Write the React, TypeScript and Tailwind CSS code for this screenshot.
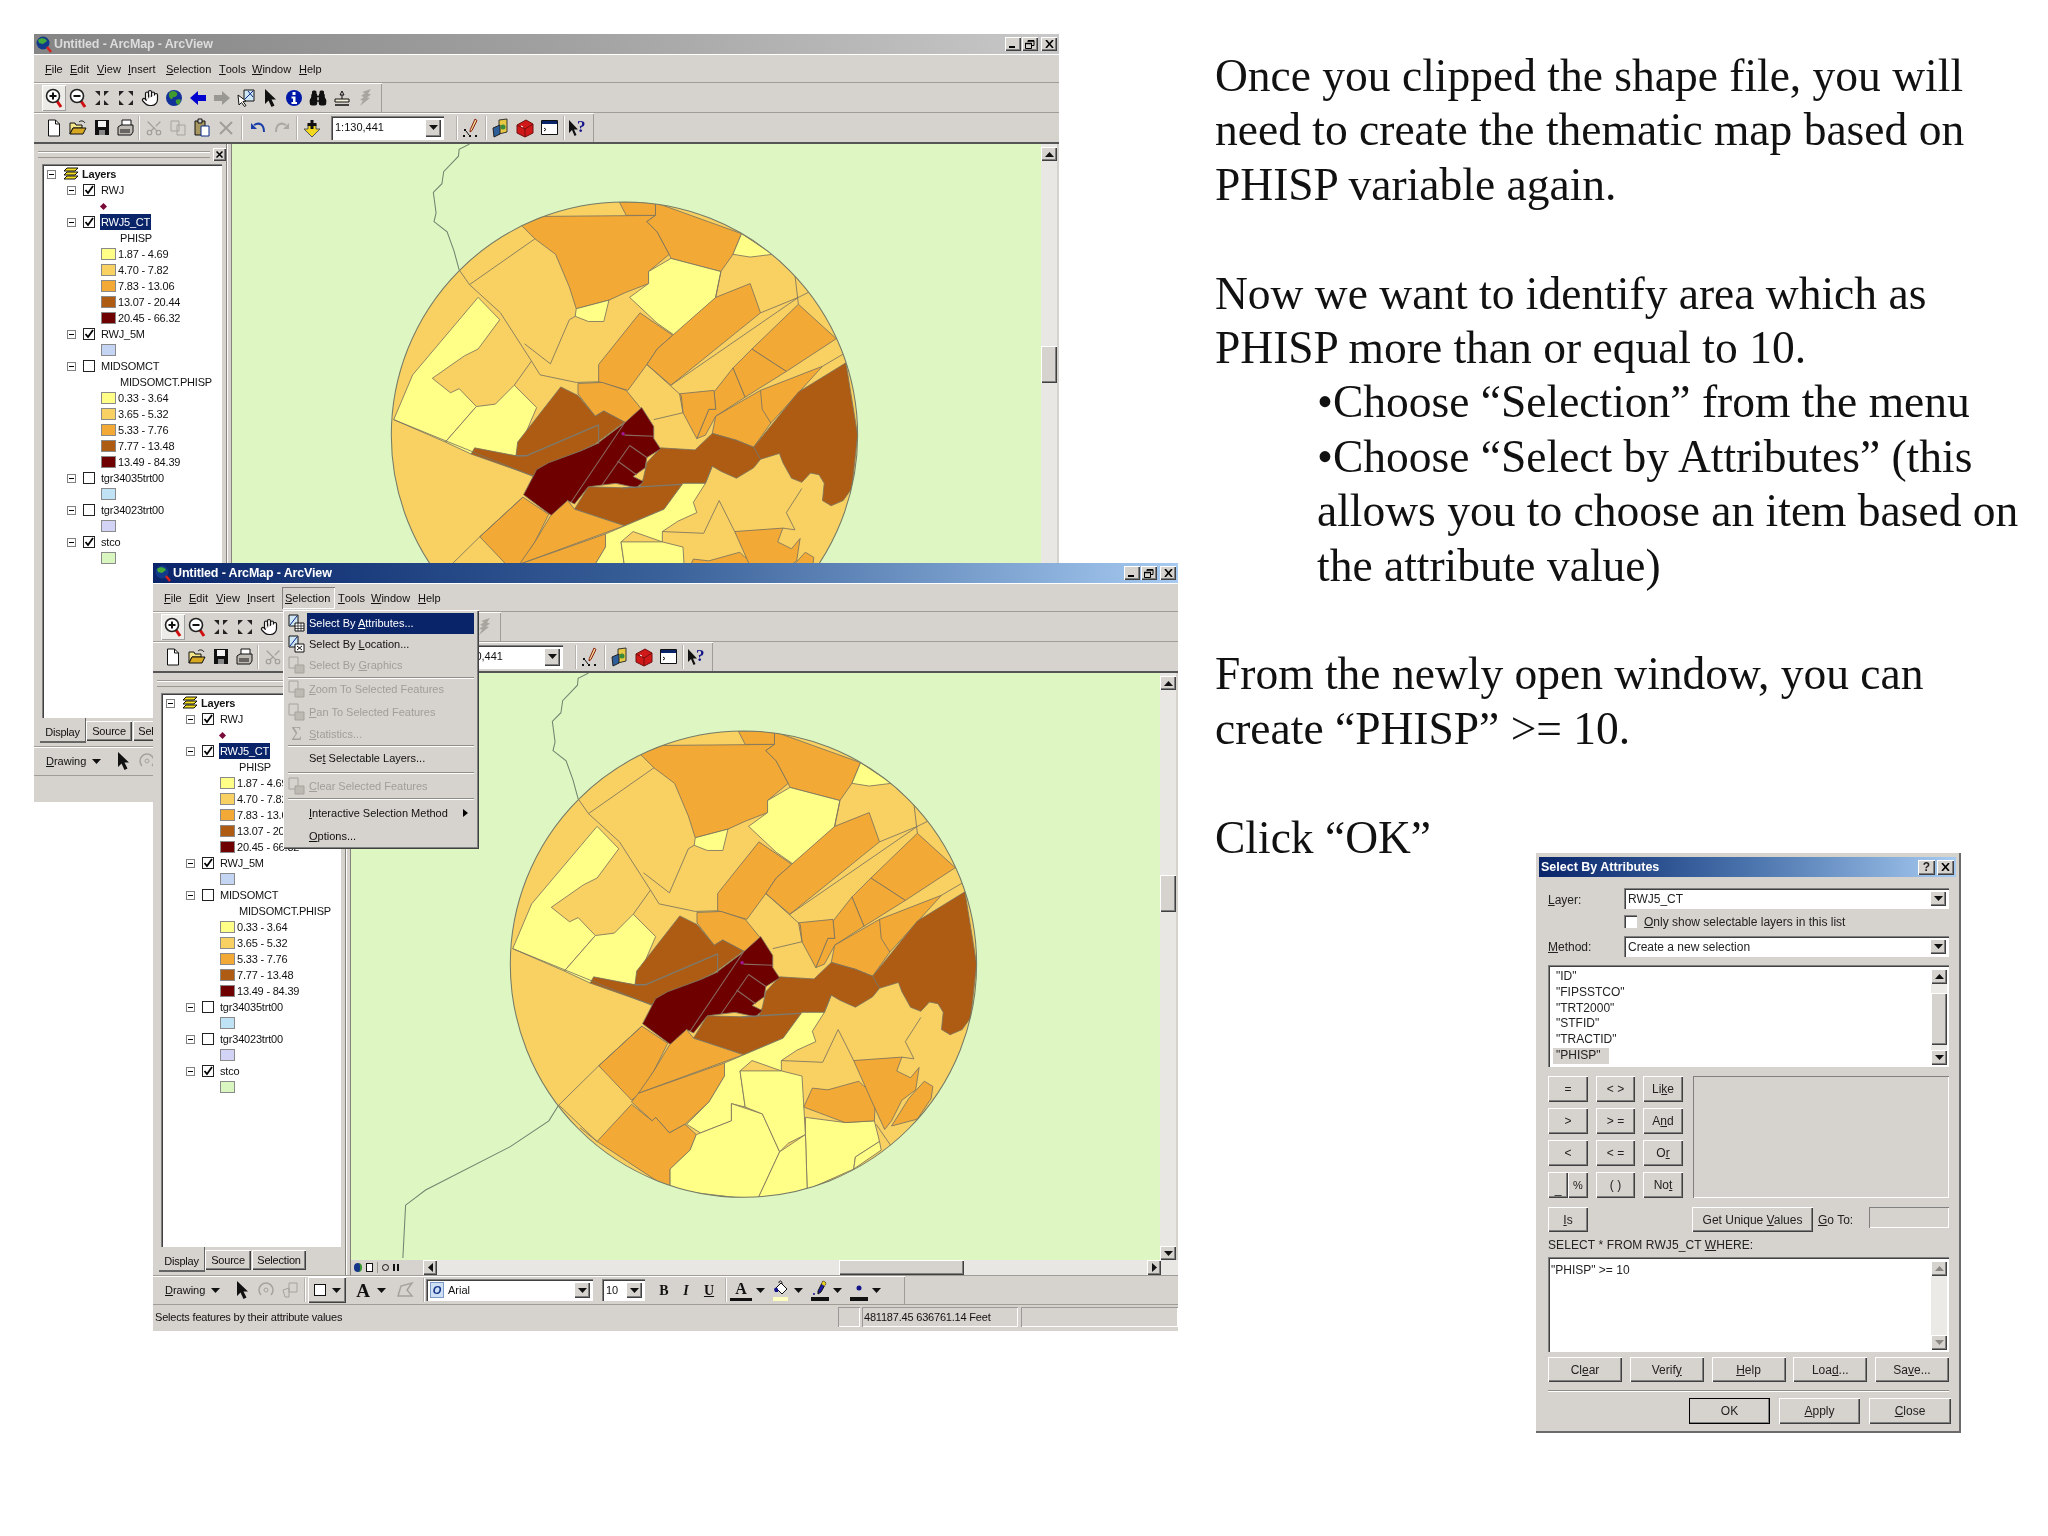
import type { ReactNode } from 'react'
import { Binoculars, Hand, Scissors } from 'lucide-react'

const raised = 'shadow-[inset_1px_1px_0_#fff,inset_-1px_-1px_0_#404040,inset_-2px_-2px_0_#808080]'
const sunken = 'shadow-[inset_1px_1px_0_#808080,inset_2px_2px_0_#404040,inset_-1px_-1px_0_#fff]'

const YEL = '#ffff88'
const LIT = '#f9d162'
const ORG = '#f3a935'
const BRN = '#ae5c14'
const DRK = '#6e0000'

const regions: [string, string][] = [
  [ORG, '465,215 530,190 855,187 830,205 860,235 895,300 835,350 835,385 770,410 720,433 625,458 605,395 565,300 505,255'],
  [ORG, '855,150 1105,240 1080,300 1045,350 900,312 895,300 860,235 830,205 855,187'],
  [ORG, '750,148 855,150 855,187 770,187'],
  [YEL, '900,312 1045,350 1020,470 910,535 860,500 780,425 835,385 835,350'],
  [YEL, '720,433 705,495 660,495 622,480 625,458'],
  [YEL, '1105,240 1195,300 1130,308 1080,300'],
  [YEL, '340,425 403,490 340,575 300,595 207,660 260,702 285,690 335,742 245,845 95,780 150,650'],
  [YEL, '445,680 510,745 450,885 330,870 320,880 245,845 335,742 390,735'],
  [ORG, '810,470 905,535 860,575 830,620 775,695 690,670 690,620'],
  [ORG, '1130,385 1160,470 900,680 830,620 860,575 905,535 1030,425'],
  [ORG, '1270,445 1380,545 1235,640 1135,575'],
  [ORG, '1135,575 1235,640 1115,715 1080,630'],
  [ORG, '1080,630 1115,715 1030,770 1000,825 975,835 1010,750 1030,750 1025,700'],
  [ORG, '925,705 1025,695 1030,750 1010,750 975,835 935,760'],
  [ORG, '1340,625 1190,790 1140,860 1090,840 1020,820 1030,770 1160,695'],
  [ORG, '630,675 700,672 770,695 815,750 770,790 705,755 680,770 630,705'],
  [BRN, '580,685 630,710 680,770 705,755 765,787 680,850 640,870 540,910 505,945 320,880 330,862 450,885 455,845'],
  [BRN, '1408,615 1442,825 1425,980 1400,1015 1365,1030 1340,1015 1345,965 1330,940 1305,935 1280,962 1250,950 1225,905 1215,878 1160,895 1140,860 1270,700'],
  [BRN, '870,862 970,868 1020,820 1090,840 1140,860 1160,895 1140,920 1090,950 1045,930 1020,915 1000,965 935,965 880,1040 765,1088 620,1040 660,975 760,978 810,975 820,950 830,905'],
  [DRK, '815,745 850,800 850,835 870,865 830,890 825,920 790,945 820,960 800,978 740,965 660,975 620,1025 600,1015 555,1060 472,998 510,925 545,905 640,870 685,850 765,790'],
  [ORG, '470,1005 545,1055 505,1135 460,1205 440,1220 345,1120'],
  [ORG, '550,1060 600,1015 620,1040 765,1088 460,1200 505,1135'],
  [ORG, '710,1112 710,1150 665,1225 595,1290 550,1315 510,1270 500,1280 440,1225 460,1200'],
  [ORG, '440,1232 500,1280 510,1270 550,1315 595,1290 628,1320 610,1365 552,1420 552,1480 340,1340'],
  [YEL, '1000,965 965,1020 975,1050 920,1075 875,1105 875,1135 790,1105 755,1135 770,1240 730,1230 730,1280 640,1315 600,1290 665,1225 710,1150 710,1112 880,1040 935,965'],
  [YEL, '552,1420 610,1365 628,1320 730,1280 730,1230 820,1260 870,1370 805,1510 552,1480'],
  [YEL, '755,1135 875,1135 935,1150 945,1320 895,1345 870,1370 820,1260 770,1240'],
  [YEL, '945,1270 1060,1285 1145,1280 1160,1340 1090,1385 1085,1420 950,1480 945,1320'],
  [YEL, '870,1370 945,1320 950,1480 805,1510'],
  [YEL, '1090,1385 1160,1340 1165,1365 1085,1420'],
  [ORG, '940,1240 965,1185 1010,1190 1100,1165 1115,1180 1150,1180 1145,1280 1060,1285'],
  [ORG, '1085,1105 1225,1095 1210,1135 1250,1155 1275,1125 1265,1190 1225,1220 1195,1280 1175,1305 1145,1240'],
  [ORG, '1195,1295 1245,1215 1290,1165 1315,1180 1310,1215 1270,1275'],
]

const boundaries = [
  '285,345 315,388 405,470 495,610 520,650 625,672 690,670',
  '315,388 505,255',
  '95,780 500,945',
  '228,1235 345,1120 470,1005',
  '230,1235 340,1340',
  '475,560 550,618 605,490 622,480',
  '495,610 445,680',
  '830,620 930,710 935,760 850,780',
  '1270,445 1260,360 1195,300',
  '1160,470 1270,425 1300,410',
  '900,680 1270,425',
  '1045,350 1030,425',
  '1340,625 1408,585',
  '1160,695 1165,750 1190,790',
  '875,1105 995,1110 1040,1015 1085,1105',
  '1000,965 1020,915',
  '1280,980 1235,1050 1260,1100 1225,1095',
  '1150,1290 1195,1355',
  '290,1300 340,1340',
]

function MapView() {
  return (
    <svg viewBox="0 0 809 587" className="block w-full h-full">
      <defs>
        <clipPath id="ringClip">
          <circle cx="765" cy="825" r="677" />
        </clipPath>
      </defs>
      <g transform="translate(129 7) scale(.3444)">
        <polyline
          points="315,-20 285,-5 283,15 240,60 235,95 210,120 218,180 212,205 250,235 270,290 285,345"
          fill="none"
          stroke="#71836f"
          strokeWidth="3"
        />
        <polyline
          points="228,1235 200,1280 88,1355 -158,1481 -216,1525 -224,1678"
          fill="none"
          stroke="#71836f"
          strokeWidth="3"
        />
        <circle cx="765" cy="825" r="677" fill={LIT} />
        <g clipPath="url(#ringClip)">
          {regions.map(([fill, pts]) => (
            <polygon key={pts} points={pts} fill={fill} stroke="#7d7460" strokeWidth="2.5" strokeLinejoin="round" />
          ))}
          {boundaries.map(pts => (
            <polyline key={pts} points={pts} fill="none" stroke="#7d7460" strokeWidth="2.5" />
          ))}
          <polyline points="690,795 480,885 450,885" fill="none" stroke="#7b7b70" strokeWidth="4" />
          <polyline points="690,795 690,850" fill="none" stroke="#7b7b70" strokeWidth="3" />
          <polyline points="760,978 930,968" fill="none" stroke="#7b7b70" strokeWidth="4" />
          <polyline points="765,790 610,1020" fill="none" stroke="#8a6a60" strokeWidth="3" />
          <polyline points="765,825 850,828" fill="none" stroke="#8a6a60" strokeWidth="3" />
          <polyline points="780,855 700,970" fill="none" stroke="#8a6a60" strokeWidth="3" />
          <polyline points="745,900 800,940" fill="none" stroke="#8a6a60" strokeWidth="3" />
          <polyline points="780,855 830,890" fill="none" stroke="#8a6a60" strokeWidth="3" />
          <circle cx="761" cy="821" r="5" fill="#a0189a" />
        </g>
        <circle cx="765" cy="825" r="677" fill="none" stroke="#747a66" strokeWidth="3" />
      </g>
    </svg>
  )
}

function Glyph({ name }: { name: string }) {
  const svg = 'block'
  switch (name) {
    case 'zoomIn':
    case 'zoomOut':
      return (
        <svg width="20" height="22" viewBox="0 0 20 22" className={svg}>
          <line x1="13" y1="14" x2="17" y2="20" stroke="#d01010" strokeWidth="3" />
          <circle cx="9" cy="9" r="6.5" fill="#fff" stroke="#222" strokeWidth="1.6" />
          <rect x="5.5" y="8" width="7" height="2" fill="#111" />
          {name === 'zoomIn' && <rect x="8" y="5.5" width="2" height="7" fill="#111" />}
        </svg>
      )
    case 'fixedIn':
      return (
        <svg width="16" height="16" viewBox="0 0 16 16" className={svg}>
          <path d="M1 1h5v5zM15 1h-5v5zM1 15h5v-5zM15 15h-5v-5z" fill="#222" />
        </svg>
      )
    case 'fixedOut':
      return (
        <svg width="16" height="16" viewBox="0 0 16 16" className={svg}>
          <path d="M1 1h5L1 6zM15 1h-5l5 5zM1 15h5l-5-5zM15 15h-5l5-5z" fill="#222" />
        </svg>
      )
    case 'hand':
      return <Hand size={18} fill="#fff" color="#111" strokeWidth={1.6} />
    case 'globe':
      return (
        <svg width="18" height="20" viewBox="0 0 18 20" className={svg}>
          <circle cx="9" cy="10" r="8" fill="#12309a" />
          <path d="M5 4c3-2 6-1 7 1s-1 4-3 4-1 3-3 2-3-5-1-7zM11 12c2-1 4-1 5 0l-2 5c-2 0-4-3-3-5z" fill="#3f9a2f" />
        </svg>
      )
    case 'back':
      return (
        <svg width="18" height="16" viewBox="0 0 18 16" className={svg}>
          <path d="M1 8l8-7v4h8v6H9v4z" fill="#0000d0" />
        </svg>
      )
    case 'fwd':
      return (
        <svg width="18" height="16" viewBox="0 0 18 16" className={svg}>
          <path d="M17 8L9 1v4H1v6h8v4z" fill="#9a9892" />
        </svg>
      )
    case 'selFeat':
      return (
        <svg width="20" height="20" viewBox="0 0 20 20" className={svg}>
          <path d="M8 2h10v11H8z" fill="#cfe6f5" stroke="#111" />
          <path d="M9 11l8-8M12 3l5 6" stroke="#0a2a8a" fill="none" />
          <path d="M2 7l1 10 2.500-2.500 3 4 1.500-1-3-4 3-.5z" fill="#fff" stroke="#111" />
        </svg>
      )
    case 'pointer':
      return (
        <svg width="14" height="20" viewBox="0 0 14 20" className={svg}>
          <path d="M2 1v15l3.500-3.500 3 6.500 3-1.500-3-6H13z" fill="#111" />
        </svg>
      )
    case 'info':
      return (
        <svg width="18" height="18" viewBox="0 0 18 18" className={svg}>
          <circle cx="9" cy="9" r="8" fill="#0018a8" />
          <rect x="7.500" y="3" width="3" height="3" fill="#fff" />
          <path d="M6.500 7.500h4V13h1.500v2H6.500v-2H8V9.500H6.500z" fill="#fff" />
        </svg>
      )
    case 'binoc':
      return <Binoculars size={18} fill="#111" color="#111" strokeWidth={2} />
    case 'measure':
      return (
        <svg width="20" height="20" viewBox="0 0 20 20" className={svg}>
          <path d="M8 7l2-4 2 4zM10 7v5" stroke="#111" fill="none" />
          <path d="M3 11h14v3H3z" fill="#f2f0da" stroke="#111" />
          <path d="M3 17h14" stroke="#111" strokeWidth="1.500" />
        </svg>
      )
    case 'bolt':
      return (
        <svg width="16" height="20" viewBox="0 0 16 20" className={svg}>
          <path d="M13 1L4 4l3 1-4 3 3 1-4 3 3 .5L2 18l10-8-3-.5 4-3-3-1z" fill="#a8a59e" />
        </svg>
      )
    case 'new':
      return (
        <svg width="14" height="18" viewBox="0 0 14 18" className={svg}>
          <path d="M1.500 1h7l4 4v12h-11z" fill="#fff" stroke="#111" />
          <path d="M8.500 1v4h4" fill="none" stroke="#111" />
        </svg>
      )
    case 'open':
      return (
        <svg width="18" height="16" viewBox="0 0 18 16" className={svg}>
          <path d="M1 3h5l1 2h6v3H4L1 14z" fill="#f4e48a" stroke="#111" />
          <path d="M1 14l3-6h13l-3 6z" fill="#d8a820" stroke="#111" />
          <path d="M10 2c2-2 5-1 6 1" stroke="#111" fill="none" />
        </svg>
      )
    case 'save':
      return (
        <svg width="16" height="17" viewBox="0 0 16 17" className={svg}>
          <path d="M1 1h14v15H1z" fill="#111" />
          <path d="M4 2h8v6H4z" fill="#f4f4f4" />
          <path d="M5 11h6v5H5z" fill="#888" />
        </svg>
      )
    case 'print':
      return (
        <svg width="18" height="17" viewBox="0 0 18 17" className={svg}>
          <path d="M5 1h9v6H5z" fill="#fff" stroke="#111" />
          <path d="M1 8l3-2h12v7l-2 3H1z" fill="#bdbbb4" stroke="#111" />
          <path d="M3 11h10M3 13h10" stroke="#111" />
        </svg>
      )
    case 'cut':
      return <Scissors size={18} color="#a09e98" className="-rotate-90" strokeWidth={1.6} />
    case 'copy':
      return (
        <svg width="18" height="16" viewBox="0 0 18 16" className={svg}>
          <path d="M2 1h8v10H2zM8 5h8v10H8z" fill="#d6d3ce" stroke="#a5a39c" />
        </svg>
      )
    case 'paste':
      return (
        <svg width="18" height="19" viewBox="0 0 18 19" className={svg}>
          <path d="M2 3h10v14H2z" fill="#a89860" stroke="#111" />
          <path d="M5 1h4v4H5z" fill="#ccc" stroke="#111" />
          <path d="M8 8h8v10H8z" fill="#fff" stroke="#0a2a8a" />
        </svg>
      )
    case 'del':
      return (
        <svg width="16" height="16" viewBox="0 0 16 16" className={svg}>
          <path d="M2 2l12 12M14 2L2 14" stroke="#a09e98" strokeWidth="2" />
        </svg>
      )
    case 'undo':
      return (
        <svg width="16" height="12" viewBox="0 0 16 12" className={svg}>
          <path d="M4 3c5-3 10-1 10 7" stroke="#1a3fa8" strokeWidth="2" fill="none" />
          <path d="M1 1v6h6z" fill="#1a3fa8" />
        </svg>
      )
    case 'redo':
      return (
        <svg width="16" height="12" viewBox="0 0 16 12" className={svg}>
          <path d="M12 3C7 0 2 2 2 10" stroke="#aaa8a2" strokeWidth="2" fill="none" />
          <path d="M15 1v6H9z" fill="#aaa8a2" />
        </svg>
      )
    case 'add':
      return (
        <svg width="18" height="20" viewBox="0 0 18 20" className={svg}>
          <path d="M5 7h8v4h4l-8 8-8-8h4z" fill="#f2d820" stroke="#555" />
          <path d="M7.500 2h3v3h3v3h-3v3h-3V8h-3V5h3z" fill="#111" />
        </svg>
      )
    case 'editor':
      return (
        <svg width="20" height="20" viewBox="0 0 20 20" className={svg}>
          <path d="M14 1l2 1.500-5 10-2 1.500.3-2.500z" fill="#f0d890" stroke="#8a2010" />
          <path d="M2 17h2v2H2zM8 17h2v2H8zM14 17h2v2h-2zM3 11h2v2H3z" fill="#111" />
          <path d="M5 13l3 4" stroke="#111" />
        </svg>
      )
    case 'catalog':
      return (
        <svg width="18" height="20" viewBox="0 0 18 20" className={svg}>
          <path d="M7 2l8-1v13l-8 2z" fill="#e8c840" stroke="#333" />
          <path d="M1 10l7-3v9l-6 3z" fill="#2f5f9a" stroke="#222" />
          <circle cx="11" cy="9" r="2.500" fill="#3a8a3a" />
        </svg>
      )
    case 'toolbox':
      return (
        <svg width="18" height="20" viewBox="0 0 18 20" className={svg}>
          <path d="M1 7l9-5 7 4v9l-8 4-8-4z" fill="#d01818" stroke="#701010" />
          <path d="M1 7l8 4 8-5M9 11v8" stroke="#701010" fill="none" />
          <path d="M5 8l2 1" stroke="#fff" />
        </svg>
      )
    case 'cmd':
      return (
        <svg width="17" height="15" viewBox="0 0 17 15" className={svg}>
          <path d="M.5.500h16v14H.5z" fill="#fff" stroke="#111" />
          <path d="M1 1h15v3H1z" fill="#0a246a" />
          <path d="M3 8l2 1.500L3 11" stroke="#111" fill="none" />
        </svg>
      )
    case 'helpQ':
      return (
        <svg width="22" height="20" viewBox="0 0 22 20" className={svg}>
          <path d="M1 2v13l3-3 2.500 6 2-1-2.500-5.500H10z" fill="#111" />
          <text x="9" y="14" fontSize="17" fontWeight="700" fontFamily="Liberation Serif, serif" fill="#14148a">
            ?
          </text>
        </svg>
      )
    case 'rotate':
      return (
        <svg width="16" height="18" viewBox="0 0 16 18" className={svg}>
          <path d="M3 14A7 7 0 1 1 13 14" fill="none" stroke="#a5a39c" strokeWidth="1.500" />
          <circle cx="8" cy="9" r="2" fill="none" stroke="#a5a39c" />
        </svg>
      )
    case 'edit':
      return (
        <svg width="18" height="18" viewBox="0 0 18 18" className={svg}>
          <path d="M8 2h8v9H8zM2 9l6-2v9H4z" fill="none" stroke="#a5a39c" />
        </svg>
      )
    case 'poly':
      return (
        <svg width="18" height="18" viewBox="0 0 18 18" className={svg}>
          <path d="M2 15l3-10 11-3-5 7 5 6z" fill="none" stroke="#a5a39c" strokeWidth="1.500" />
        </svg>
      )
    case 'bucket':
      return (
        <svg width="18" height="21" viewBox="0 0 18 21" className={svg}>
          <path d="M4 8l5-5 6 6-5 5z" fill="#fff" stroke="#111" />
          <path d="M7 3c0-3 3-3 3 1" stroke="#111" fill="none" />
          <path d="M2 9c2-2 3-2 4 0v3H3z" fill="#14148a" />
          <rect x="1" y="17" width="15" height="4" fill="#fdfdc0" />
        </svg>
      )
    case 'pen':
      return (
        <svg width="18" height="21" viewBox="0 0 18 21" className={svg}>
          <path d="M12 1l3 2-5 9-3 2 0-3z" fill="#1a1aa8" stroke="#111" />
          <path d="M12 1l3 2-1.500 3-3-2z" fill="#e8d020" />
          <circle cx="3" cy="14" r="1" fill="#14148a" />
          <rect x="0" y="17" width="18" height="4" fill="#111" />
        </svg>
      )
    case 'point':
      return (
        <svg width="18" height="21" viewBox="0 0 18 21" className={svg}>
          <circle cx="9" cy="8" r="2.500" fill="#14148a" />
          <rect x="0" y="17" width="18" height="4" fill="#111" />
        </svg>
      )
    default:
      return null
  }
}

function Btn({ name, pressed, className }: { name: string; pressed?: boolean; className?: string }) {
  return (
    <div
      className={`w-[24px] h-[26px] shrink-0 flex items-center justify-center ${
        pressed ? 'bg-[#ecebe8] shadow-[inset_1px_1px_0_#fff,inset_-1px_-1px_0_#a0a0a0]' : ''
      } ${className ?? ''}`}
    >
      <Glyph name={name} />
    </div>
  )
}

function Sep({ className }: { className?: string }) {
  return <div className={`w-[2px] h-[24px] shrink-0 bg-[#b5b2ab] border-r border-white ${className ?? ''}`} />
}

function Caret({ className }: { className?: string }) {
  return (
    <svg width="9" height="5" viewBox="0 0 9 5" className={`shrink-0 ${className ?? ''}`}>
      <path d="M0 0h9L4.500 5z" fill="#111" />
    </svg>
  )
}

function ScrollBtn({ dir, className, dim }: { dir: 'up' | 'down' | 'left' | 'right'; className?: string; dim?: boolean }) {
  const shape = { up: 'M0 5L4.500 0 9 5z', down: 'M0 0h9L4.500 5z', left: 'M5 0v9L0 4.500z', right: 'M0 0v9l5-4.500z' }[dir]
  return (
    <div className={`bg-[#d6d3ce] flex items-center justify-center ${raised} ${className ?? ''}`}>
      <svg width="9" height="9" viewBox="0 0 9 9">
        <g transform={dir === 'left' || dir === 'right' ? 'translate(2 0)' : 'translate(0 2)'}>
          <path d={shape} fill={dim ? '#8a8880' : '#111'} />
        </g>
      </svg>
    </div>
  )
}

function Combo({ children, className }: { children: ReactNode; className?: string }) {
  return (
    <div className={`flex items-center bg-white pl-[4px] pr-[3px] ${sunken} ${className ?? ''}`}>
      <div className="flex-1 flex items-center gap-[4px] whitespace-nowrap overflow-hidden">{children}</div>
      <ScrollBtn dir="down" className="w-[16px] h-[calc(100%-6px)] shrink-0" />
    </div>
  )
}

const menus: [ReactNode, string][] = [
  [<><u>F</u>ile</>, 'w-[25px]'],
  [<><u>E</u>dit</>, 'w-[27px]'],
  [<><u>V</u>iew</>, 'w-[31px]'],
  [<><u>I</u>nsert</>, 'w-[38px]'],
  [<><u>S</u>election</>, 'w-[53px]'],
  [<><u>T</u>ools</>, 'w-[33px]'],
  [<><u>W</u>indow</>, 'w-[47px]'],
  [<><u>H</u>elp</>, 'w-[40px]'],
]

type Row =
  | { kind: 'layer'; name: string; on: boolean; selected?: boolean }
  | { kind: 'sym'; color: string; label?: string }
  | { kind: 'mark' }
  | { kind: 'head'; name: string }

const tree: Row[] = [
  { kind: 'layer', name: 'RWJ', on: true },
  { kind: 'mark' },
  { kind: 'layer', name: 'RWJ5_CT', on: true, selected: true },
  { kind: 'head', name: 'PHISP' },
  { kind: 'sym', color: '#ffff88', label: '1.87 - 4.69' },
  { kind: 'sym', color: '#f9d162', label: '4.70 - 7.82' },
  { kind: 'sym', color: '#f3a935', label: '7.83 - 13.06' },
  { kind: 'sym', color: '#ae5c14', label: '13.07 - 20.44' },
  { kind: 'sym', color: '#6e0000', label: '20.45 - 66.32' },
  { kind: 'layer', name: 'RWJ_5M', on: true },
  { kind: 'sym', color: '#c3d5f2' },
  { kind: 'layer', name: 'MIDSOMCT', on: false },
  { kind: 'head', name: 'MIDSOMCT.PHISP' },
  { kind: 'sym', color: '#ffff88', label: '0.33 - 3.64' },
  { kind: 'sym', color: '#f9d162', label: '3.65 - 5.32' },
  { kind: 'sym', color: '#f3a935', label: '5.33 - 7.76' },
  { kind: 'sym', color: '#ae5c14', label: '7.77 - 13.48' },
  { kind: 'sym', color: '#6e0000', label: '13.49 - 84.39' },
  { kind: 'layer', name: 'tgr34035trt00', on: false },
  { kind: 'sym', color: '#bfe3f5' },
  { kind: 'layer', name: 'tgr34023trt00', on: false },
  { kind: 'sym', color: '#d3d3f5' },
  { kind: 'layer', name: 'stco', on: true },
  { kind: 'sym', color: '#d9f5c0' },
]

function Expander({ className }: { className?: string }) {
  return (
    <div className={`w-[9px] h-[9px] shrink-0 border border-[#808080] bg-white flex items-center justify-center ${className ?? ''}`}>
      <div className="w-[5px] h-px bg-black" />
    </div>
  )
}

function TocRow({ row }: { row: Row }) {
  if (row.kind === 'layer') {
    return (
      <div className="h-[16px] flex items-center">
        <Expander className="ml-[22px]" />
        <div className="w-[12px] h-[12px] ml-[7px] shrink-0 border border-[#222] bg-white flex items-center justify-center">
          {row.on && (
            <svg width="10" height="10" viewBox="0 0 10 10">
              <path d="M1.500 5l2.500 3 5-7" fill="none" stroke="#000" strokeWidth="1.800" />
            </svg>
          )}
        </div>
        <span className={`ml-[5px] px-px leading-[16px] ${row.selected ? 'bg-[#0a246a] text-white' : ''}`}>{row.name}</span>
      </div>
    )
  }
  if (row.kind === 'mark') {
    return (
      <div className="h-[16px] flex items-center pl-[56px]">
        <div className="w-[5px] h-[5px] rotate-45 bg-[#7a0a3a]" />
      </div>
    )
  }
  if (row.kind === 'head') return <div className="h-[16px] leading-[16px] pl-[75px]">{row.name}</div>
  return (
    <div className="h-[16px] flex items-center pl-[56px]">
      <div className="w-[15px] h-[12px] shrink-0 border border-[#8a8a8a]" style={{ backgroundColor: row.color }} />
      {row.label && <span className="ml-[2px]">{row.label}</span>}
    </div>
  )
}

function Toc() {
  return (
    <div className={`ml-[8px] mr-[4px] flex-1 bg-white pt-[2px] pl-[3px] tracking-[-0.2px] text-[#111] overflow-hidden ${sunken}`}>
      <div className="h-[16px] flex items-center pl-[2px]">
        <Expander />
        <svg width="16" height="14" viewBox="0 0 16 14" className="ml-[7px] shrink-0">
          <path d="M4 1h11l-3 3H1zM4 5h11l-3 3H1zM4 9h11l-3 3H1z" fill="#f4e020" stroke="#111" />
        </svg>
        <span className="ml-[3px] font-bold">Layers</span>
      </div>
      {tree.map((row, i) => (
        <TocRow key={i} row={row} />
      ))}
    </div>
  )
}

function WinControls() {
  return (
    <div className="ml-auto flex items-center gap-px">
      <div className={`w-[16px] h-[14px] bg-[#d6d3ce] flex items-end pl-[4px] pb-[3px] ${raised}`}>
        <div className="w-[6px] h-[2px] bg-black" />
      </div>
      <div className={`w-[16px] h-[14px] bg-[#d6d3ce] flex items-center justify-center ${raised}`}>
        <svg width="10" height="9" viewBox="0 0 10 9">
          <path d="M3 2V.5h6v5H7M.5 3.500h6v5h-6z" fill="none" stroke="#000" />
          <path d="M3 1h6M0 3.500h7" stroke="#000" strokeWidth="1.500" />
        </svg>
      </div>
      <div className={`ml-[2px] w-[16px] h-[14px] bg-[#d6d3ce] flex items-center justify-center ${raised}`}>
        <svg width="9" height="8" viewBox="0 0 9 8">
          <path d="M1 0l7 8M8 0L1 8" stroke="#000" strokeWidth="1.600" />
        </svg>
      </div>
    </div>
  )
}

function ArcWindow({ active, className }: { active: boolean; className: string }) {
  return (
    <div className={`absolute w-[1025px] h-[768px] flex flex-col bg-[#d6d3ce] text-[11px] text-[#111] ${className}`}>
      {/* title bar */}
      <div
        className={`h-[20px] shrink-0 flex items-center pl-[1px] pr-[2px] ${
          active ? 'bg-linear-to-r from-[#0a246a] via-[#3a6199] to-[#a6caf0]' : 'bg-linear-to-r from-[#858585] via-[#a0a0a0] to-[#c8c8c8]'
        }`}
      >
        <svg width="18" height="18" viewBox="0 0 18 18" className="shrink-0">
          <circle cx="8" cy="8" r="6.500" fill="#123a8a" />
          <path d="M3 5c3-3 8-2 9 1l-4 3-4-1z" fill="#42a83a" />
          <path d="M12 12l4 5" stroke="#d82020" strokeWidth="2.500" />
        </svg>
        <span className={`ml-px text-[12.500px] font-bold tracking-[-0.15px] ${active ? 'text-white' : 'text-[#dcdcdc]'}`}>
          Untitled - ArcMap - ArcView
        </span>
        <WinControls />
      </div>

      {/* menu */}
      <div className="h-[29px] shrink-0 flex items-center pl-[8px] pt-[2px] border-b border-[#a09d96] shadow-[inset_0_1px_0_#fff]">
        {menus.map(([label, w], i) => (
          <div key={i} className={`h-[22px] flex items-center pl-[3px] whitespace-nowrap ${w} ${active && i === 4 ? 'shadow-[inset_1px_1px_0_#808080,inset_-1px_-1px_0_#fff]' : ''}`}>
            {label}
          </div>
        ))}
      </div>

      {/* standard toolbars */}
      <div className="h-[30px] shrink-0 border-b border-[#a09d96]">
        <div className="w-[348px] h-full flex items-center pl-[8px] shadow-[inset_0_1px_0_#fff,inset_-1px_0_0_#a09d96]">
          <Btn name="zoomIn" pressed />
          {['zoomOut', 'fixedIn', 'fixedOut', 'hand', 'globe', 'back', 'fwd', 'selFeat', 'pointer', 'info', 'binoc', 'measure', 'bolt'].map(n => (
            <Btn key={n} name={n} />
          ))}
        </div>
      </div>
      <div className="h-[31px] shrink-0 border-b-2 border-[#555]">
        <div className="w-[560px] h-full flex items-center pl-[8px] shadow-[inset_0_1px_0_#fff,inset_-1px_0_0_#a09d96]">
          {['new', 'open', 'save', 'print'].map(n => (
            <Btn key={n} name={n} />
          ))}
          <Sep className="mr-[2px]" />
          {['cut', 'copy', 'paste', 'del'].map(n => (
            <Btn key={n} name={n} />
          ))}
          <Sep className="mx-[3px]" />
          <Btn name="undo" />
          <Btn name="redo" />
          <Sep className="mx-[2px]" />
          <Btn name="add" />
          <Combo className="w-[113px] h-[24px] ml-[7px] shrink-0">
            <span>1:130,441</span>
          </Combo>
          <Sep className="ml-[12px] mr-px" />
          <Btn name="editor" />
          <Sep className="mx-[2px]" />
          <Btn name="catalog" />
          <Btn name="toolbox" />
          <Btn name="cmd" />
          <Sep className="mx-[2px]" />
          <Btn name="helpQ" />
        </div>
      </div>

      {/* table of contents + map */}
      <div className="flex-1 min-h-0 flex">
        <div className="w-[192px] shrink-0 flex flex-col">
          <div className="h-[20px] shrink-0 flex items-center pl-[4px]">
            <div className="flex-1 h-[7px] border-y border-[#9b9891] shadow-[inset_0_1px_0_#fff]" />
            <div className={`ml-[3px] w-[13px] h-[13px] flex items-center justify-center ${raised}`}>
              <svg width="7" height="7" viewBox="0 0 7 7">
                <path d="M.5.5l6 6M6.500.5l-6 6" stroke="#000" strokeWidth="1.500" />
              </svg>
            </div>
          </div>
          <Toc />
          <div className="h-[28px] shrink-0 flex items-start pl-[6px] tracking-[-0.2px]">
            <div className="w-[46px] h-[25px] pt-[6px] flex items-center justify-center border-b-2 border-r border-[#666]">Display</div>
            <div className={`w-[46px] h-[20px] mt-[3px] flex items-center justify-center ${raised}`}>Source</div>
            <div className={`w-[54px] h-[20px] mt-[3px] ml-px flex items-center justify-center ${raised}`}>Selection</div>
          </div>
        </div>
        <div className="w-[6px] shrink-0 border-x border-[#85827b] shadow-[inset_1px_0_0_#fff]" />
        <div className="flex-1 min-w-0 flex flex-col">
          <div className="flex-1 min-h-0 flex">
            <div className="flex-1 min-w-0 bg-[#ddf6c2] overflow-hidden">
              <MapView />
            </div>
            <div className="w-[16px] shrink-0 bg-[#e9e7e3] flex flex-col pt-[3px]">
              <ScrollBtn dir="up" className="h-[14px] shrink-0" />
              <div className="h-[185px] shrink-0" />
              <div className={`h-[37px] shrink-0 bg-[#d6d3ce] ${raised}`} />
              <div className="flex-1" />
              <ScrollBtn dir="down" className="h-[14px] shrink-0" />
            </div>
            <div className="w-[2px] shrink-0" />
          </div>
          <div className="h-[15px] shrink-0 flex items-center bg-[#e9e7e3] pr-[17px]">
            <div className="w-[72px] h-full flex items-center pl-[3px] bg-[#d6d3ce] gap-[4px]">
              <div className="w-[8px] h-[9px] rounded-full bg-[#14348a] border-r-2 border-[#3a9a2f]" />
              <div className="w-[7px] h-[9px] border border-[#111] bg-white" />
              <div className="w-px h-[11px] bg-[#9b9891]" />
              <div className="w-[7px] h-[7px] rounded-full border border-[#111]" />
              <div className="w-[6px] h-[7px] border-x-2 border-[#111]" />
            </div>
            <ScrollBtn dir="left" className="w-[14px] h-full shrink-0" />
            <div className="w-[402px] shrink-0" />
            <div className={`w-[125px] h-full shrink-0 bg-[#d6d3ce] ${raised}`} />
            <div className="flex-1" />
            <ScrollBtn dir="right" className="w-[14px] h-full shrink-0" />
          </div>
        </div>
      </div>

      {/* drawing toolbar */}
      <div className="h-[30px] shrink-0 border-y border-[#a09d96]">
        <div className="w-[752px] h-full flex items-center pl-[12px] shadow-[inset_0_1px_0_#fff,inset_-1px_0_0_#a09d96]">
          <div className="w-[65px] flex items-center gap-[6px] shrink-0">
            <span><u>D</u>rawing</span>
            <Caret />
          </div>
          <Btn name="pointer" />
          <Btn name="rotate" className="w-[22px]" />
          <Btn name="edit" />
          <Sep className="mx-[2px]" />
          <div className={`w-[38px] h-[26px] shrink-0 flex items-center gap-[3px] pl-[6px] ${raised}`}>
            <div className="w-[12px] h-[12px] bg-white border border-[#111]" />
            <Caret className="ml-[3px]" />
          </div>
          <div className="w-[26px] ml-[4px] shrink-0 text-center text-[19px] font-bold font-['Liberation_Serif',serif] leading-none">A</div>
          <Caret className="ml-px mr-[5px]" />
          <Btn name="poly" className="ml-[2px]" />
          <Sep className="ml-[6px] mr-px" />
          <Combo className="w-[167px] h-[22px] shrink-0">
            <span className="w-[14px] h-[16px] bg-[#cfe0f5] border border-[#7a9ac8] text-[#14348a] italic font-bold text-center leading-[14px]">O</span>
            <span>Arial</span>
          </Combo>
          <Combo className="w-[43px] h-[22px] ml-[9px] shrink-0">
            <span>10</span>
          </Combo>
          <div className="w-[22px] ml-[8px] shrink-0 text-center font-['Liberation_Serif',serif] font-bold text-[14px]">B</div>
          <div className="w-[22px] shrink-0 text-center font-['Liberation_Serif',serif] font-bold italic text-[14px]">I</div>
          <div className="w-[24px] shrink-0 text-center font-['Liberation_Serif',serif] font-bold underline text-[14px]">U</div>
          <Sep className="ml-[4px] mr-[3px]" />
          <div className="w-[22px] shrink-0 text-center font-['Liberation_Serif',serif] font-bold text-[16px] leading-[18px] border-b-[3px] border-[#111]">A</div>
          <Caret className="ml-[4px] mr-[7px]" />
          <Glyph name="bucket" />
          <Caret className="ml-[4px] mr-[8px]" />
          <Glyph name="pen" />
          <Caret className="ml-[4px] mr-[8px]" />
          <Glyph name="point" />
          <Caret className="ml-[4px]" />
        </div>
      </div>

      {/* status bar */}
      <div className="h-[26px] shrink-0 flex items-start pt-[2px] tracking-[-0.2px]">
        <div className="w-[685px] pl-[2px] leading-[20px] shrink-0">{active && 'Selects features by their attribute values'}</div>
        <div className="w-[22px] h-[20px] shrink-0 shadow-[inset_1px_1px_0_#999,inset_-1px_-1px_0_#fff]" />
        <div className="w-[156px] h-[20px] ml-[2px] pl-[2px] leading-[20px] shrink-0 shadow-[inset_1px_1px_0_#999,inset_-1px_-1px_0_#fff]">481187.45 636761.14 Feet</div>
        <div className="flex-1 h-[20px] ml-[3px] shadow-[inset_1px_1px_0_#999,inset_-1px_-1px_0_#fff]" />
      </div>
    </div>
  )
}

function MenuIcon({ kind, dim }: { kind: string; dim?: boolean }) {
  const c = dim ? '#a5a39c' : '#111'
  if (kind === 'sum') return <div className="text-[18px] font-['Liberation_Serif',serif] leading-none text-[#a5a39c]">Σ</div>
  return (
    <svg width="17" height="19" viewBox="0 0 17 19">
      <path d="M1 1h9v11H1z" fill={dim ? '#d6d3ce' : '#cfe6f5'} stroke={c} />
      {!dim && <path d="M2 11l7-9" stroke="#0a2a8a" />}
      <path d="M7 9h9v8H7z" fill={dim ? '#bdbab3' : '#fff'} stroke={c} />
      {kind === 'attr' && <path d="M7 12h9M7 14.500h9M10 9v8M13 9v8" stroke="#111" strokeWidth=".7" />}
      {kind === 'loc' && <path d="M9 11l5 4M14 11l-5 4" stroke="#111" />}
    </svg>
  )
}

type MenuRow = { label?: ReactNode; icon?: string; dim?: boolean; hot?: boolean; sub?: boolean; h: string }

const selectionMenu: MenuRow[] = [
  { label: <>Select By <u>A</u>ttributes...</>, icon: 'attr', hot: true, h: 'h-[21px]' },
  { label: <>Select By <u>L</u>ocation...</>, icon: 'loc', h: 'h-[21px]' },
  { label: <>Select By <u>G</u>raphics</>, icon: 'gfx', dim: true, h: 'h-[21px]' },
  { h: 'h-[3px]' },
  { label: <><u>Z</u>oom To Selected Features</>, icon: 'gfx', dim: true, h: 'h-[21px]' },
  { label: <><u>P</u>an To Selected Features</>, icon: 'gfx', dim: true, h: 'h-[24px]' },
  { label: <><u>S</u>tatistics...</>, icon: 'sum', dim: true, h: 'h-[20px]' },
  { h: 'h-[3px]' },
  { label: <>Se<u>t</u> Selectable Layers...</>, h: 'h-[23px]' },
  { h: 'h-[5px]' },
  { label: <><u>C</u>lear Selected Features</>, icon: 'gfx', dim: true, h: 'h-[22px]' },
  { h: 'h-[4px]' },
  { label: <><u>I</u>nteractive Selection Method</>, sub: true, h: 'h-[24px]' },
  { label: <><u>O</u>ptions...</>, h: 'h-[23px]' },
]

function SelectionMenu() {
  return (
    <div className={`absolute left-[130px] top-[47px] w-[196px] h-[239px] pt-[3px] px-[3px] bg-[#d6d3ce] text-[11px] text-[#111] ${raised}`}>
      {selectionMenu.map((it, i) =>
        it.label ? (
          <div key={i} className={`${it.h} flex items-center`}>
            <div className="w-[21px] shrink-0 flex justify-center">{it.icon && <MenuIcon kind={it.icon} dim={it.dim} />}</div>
            <div className={`flex-1 h-full flex items-center pl-[2px] mr-[2px] ${it.hot ? 'bg-[#0a246a] text-white' : ''} ${it.dim ? 'text-[#a09e98]' : ''}`}>
              <span>{it.label}</span>
              {it.sub && <div className="ml-auto mr-[6px] w-0 h-0 border-y-[4px] border-y-transparent border-l-[5px] border-l-black" />}
            </div>
          </div>
        ) : (
          <div key={i} className={`${it.h} flex items-center px-[2px]`}>
            <div className="w-full h-[2px] border-t border-[#8f8d86] bg-white" />
          </div>
        ),
      )}
    </div>
  )
}

function Push({ children, className }: { children: ReactNode; className?: string }) {
  return <div className={`bg-[#d6d3ce] flex items-center justify-center whitespace-nowrap ${raised} ${className ?? ''}`}>{children}</div>
}

const opButtons: ReactNode[] = [
  '=', '< >', <>Li<u>k</u>e</>,
  '>', '> =', <>A<u>n</u>d</>,
  '<', '< =', <>O<u>r</u></>,
  'pct', '( )', <>No<u>t</u></>,
]

function SelectDialog() {
  return (
    <div className="absolute left-[1536px] top-[853px] w-[425px] h-[580px] pt-[4px] px-[3px] bg-[#d6d3ce] border-r-2 border-b-2 border-[#6b6b6b] text-[12px] text-[#222]">
      <div className="h-[20px] flex items-center pl-[2px] pr-[2px] bg-linear-to-r from-[#0a246a] via-[#4a73ac] to-[#a6caf0]">
        <span className="text-white font-bold text-[12.500px]">Select By Attributes</span>
        <div className={`ml-auto w-[17px] h-[15px] bg-[#d6d3ce] flex items-center justify-center font-bold leading-none ${raised}`}>?</div>
        <div className={`ml-[2px] w-[17px] h-[15px] bg-[#d6d3ce] flex items-center justify-center ${raised}`}>
          <svg width="9" height="8" viewBox="0 0 9 8">
            <path d="M1 0l7 8M8 0L1 8" stroke="#000" strokeWidth="1.600" />
          </svg>
        </div>
      </div>
      <div className="ml-[9px] w-[401px]">
        <div className="mt-[11px] flex items-center h-[21px]">
          <div className="w-[76px] shrink-0 pt-[2px]"><u>L</u>ayer:</div>
          <Combo className="flex-1 h-full"><span>RWJ5_CT</span></Combo>
        </div>
        <div className="mt-[6px] flex items-center h-[13px] pl-[76px]">
          <div className={`w-[13px] h-[13px] bg-white ${sunken}`} />
          <div className="ml-[7px]"><u>O</u>nly show selectable layers in this list</div>
        </div>
        <div className="mt-[8px] flex items-center h-[21px]">
          <div className="w-[76px] shrink-0"><u>M</u>ethod:</div>
          <Combo className="flex-1 h-full"><span>Create a new selection</span></Combo>
        </div>
        <div className={`mt-[8px] h-[102px] flex bg-white pt-[4px] pl-[5px] pr-[2px] pb-[2px] ${sunken}`}>
          <div className="flex-1 leading-[15.800px]">
            {['"ID"', '"FIPSSTCO"', '"TRT2000"', '"STFID"', '"TRACTID"'].map(f => (
              <div key={f} className="pl-[3px]">{f}</div>
            ))}
            <div className="w-[56px] pl-[3px] bg-[#d6d3ce]">"PHISP"</div>
          </div>
          <div className="w-[16px] shrink-0 flex flex-col bg-[#eceae6]">
            <ScrollBtn dir="up" className="h-[15px] shrink-0" />
            <div className="h-[9px]" />
            <div className={`h-[52px] bg-[#d6d3ce] ${raised}`} />
            <div className="flex-1" />
            <ScrollBtn dir="down" className="h-[15px] shrink-0" />
          </div>
        </div>

        <div className="mt-[9px] flex">
          <div className="grid grid-cols-[40px_39px_40px] gap-x-[8px] gap-y-[6px] auto-rows-[26px] w-[135px] shrink-0">
            {opButtons.map((b, i) =>
              b === 'pct' ? (
                <div key={i} className="flex">
                  <Push className="w-[20px]"><span className="mt-[8px]">_</span></Push>
                  <Push className="w-[20px] text-[11px]">%</Push>
                </div>
              ) : (
                <Push key={i}>{b}</Push>
              ),
            )}
          </div>
          <div className="ml-[10px] flex-1 h-[122px] shadow-[inset_1px_1px_0_#808080,inset_-1px_-1px_0_#fff]" />
        </div>

        <div className="mt-[9px] flex items-center h-[25px]">
          <Push className="w-[40px] h-full"><span><u>I</u>s</span></Push>
          <Push className="w-[121px] h-full ml-[104px]"><span>Get Unique <u>V</u>alues</span></Push>
          <div className="ml-[5px] w-[51px] shrink-0"><u>G</u>o To:</div>
          <div className="flex-1 h-[21px] self-start shadow-[inset_1px_1px_0_#808080,inset_-1px_-1px_0_#fff]" />
        </div>
        <div className="h-[25px] flex items-center whitespace-nowrap tracking-[0.1px]">SELECT * FROM RWJ5_CT <u className="ml-[3px]">W</u>HERE:</div>
        <div className={`h-[95px] flex bg-white pt-[4px] pl-[3px] pr-[2px] pb-[2px] ${sunken}`}>
          <div className="flex-1">"PHISP" &gt;= 10</div>
          <div className="w-[16px] shrink-0 flex flex-col bg-[#eceae6]">
            <ScrollBtn dir="up" dim className="h-[15px] shrink-0" />
            <div className="flex-1" />
            <ScrollBtn dir="down" dim className="h-[15px] shrink-0" />
          </div>
        </div>
        <div className="mt-[5px] h-[25px] flex justify-between">
          <Push className="w-[74px]"><span>Cl<u>e</u>ar</span></Push>
          <Push className="w-[74px]"><span>Verif<u>y</u></span></Push>
          <Push className="w-[74px]"><span><u>H</u>elp</span></Push>
          <Push className="w-[74px]"><span>Loa<u>d</u>...</span></Push>
          <Push className="w-[74px]"><span>Sa<u>v</u>e...</span></Push>
        </div>
        <div className="mt-[8px] h-[2px] border-t border-[#8f8d86] bg-white" />
        <div className="mt-[6px] h-[26px] flex justify-end gap-[9px] -mr-[2px]">
          <Push className="w-[81px] outline outline-black -outline-offset-1">OK</Push>
          <Push className="w-[81px]"><span><u>A</u>pply</span></Push>
          <Push className="w-[82px]"><span><u>C</u>lose</span></Push>
        </div>
      </div>
    </div>
  )
}

function Slide() {
  return (
    <div className="pl-[1215px] pt-[49px] font-['Liberation_Serif',serif] text-[45.500px] leading-[54.400px] text-[#111] whitespace-nowrap">
      <p>Once you clipped the shape file, you will</p>
      <p>need to create the thematic map based on</p>
      <p className="mb-[54.400px]">PHISP variable again.</p>
      <p>Now we want to identify area which as</p>
      <p>PHISP more than or equal to 10.</p>
      <div className="pl-[102px] mb-[54.400px]">
        <p>•Choose “Selection” from the menu</p>
        <p>•Choose “Select by Attributes” (this</p>
        <p>allows you to choose an item based on</p>
        <p>the attribute value)</p>
      </div>
      <p>From the newly open window, you can</p>
      <p className="mb-[54.400px]">create “PHISP” &gt;= 10.</p>
      <p>Click “OK”</p>
    </div>
  )
}

export default function App() {
  return (
    <div className="relative w-[2048px] h-[1536px] overflow-hidden bg-white font-['Liberation_Sans',sans-serif] blur-[0.4px]">
      <Slide />
      <ArcWindow active={false} className="left-[34px] top-[34px]" />
      <div className="absolute left-[153px] top-[563px]">
        <ArcWindow active className="left-0 top-0" />
        <SelectionMenu />
      </div>
      <SelectDialog />
    </div>
  )
}
